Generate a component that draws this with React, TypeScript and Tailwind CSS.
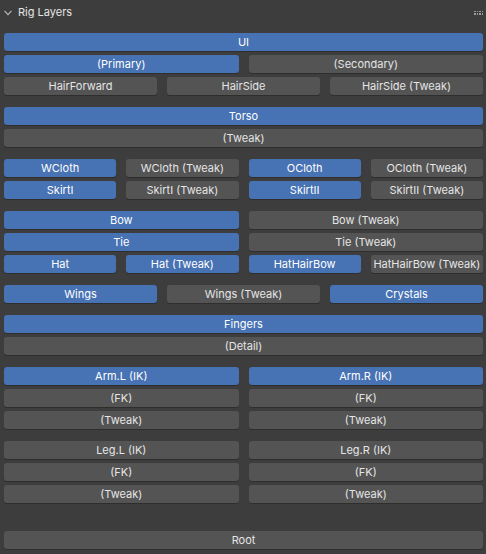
import React from 'react';

type Btn = { label: string; on?: boolean };

const Button = ({ label, on }: Btn) => (
  <div
    className={`h-[18px] rounded-[3px] flex items-center justify-center text-[11px] leading-none whitespace-nowrap overflow-hidden shadow-[0_1px_0_#2e2e2e] ${
      on ? 'bg-[#4772b3] text-white' : 'bg-[#545454] text-[#e5e5e5]'
    }`}
  >
    {label}
  </div>
);

const Row = ({ items, cols }: { items: Btn[]; cols: 1 | 2 | 3 | 4 }) => {
  const grid =
    cols === 1 ? 'grid-cols-1' : cols === 2 ? 'grid-cols-2' : cols === 3 ? 'grid-cols-3' : 'grid-cols-4';
  return (
    <div className={`grid ${grid} gap-x-[10px]`}>
      {items.map((b, i) => (
        <Button key={i} {...b} />
      ))}
    </div>
  );
};

const groups: { cols: 1 | 2 | 3 | 4; items: Btn[] }[][] = [
  [
    { cols: 1, items: [{ label: 'UI', on: true }] },
    { cols: 2, items: [{ label: '(Primary)', on: true }, { label: '(Secondary)' }] },
    { cols: 3, items: [{ label: 'HairForward' }, { label: 'HairSide' }, { label: 'HairSide (Tweak)' }] },
  ],
  [
    { cols: 1, items: [{ label: 'Torso', on: true }] },
    { cols: 1, items: [{ label: '(Tweak)' }] },
  ],
  [
    {
      cols: 4,
      items: [
        { label: 'WCloth', on: true },
        { label: 'WCloth (Tweak)' },
        { label: 'OCloth', on: true },
        { label: 'OCloth (Tweak)' },
      ],
    },
    {
      cols: 4,
      items: [
        { label: 'SkirtI', on: true },
        { label: 'SkirtI (Tweak)' },
        { label: 'SkirtII', on: true },
        { label: 'SkirtII (Tweak)' },
      ],
    },
  ],
  [
    { cols: 2, items: [{ label: 'Bow', on: true }, { label: 'Bow (Tweak)' }] },
    { cols: 2, items: [{ label: 'Tie', on: true }, { label: 'Tie (Tweak)' }] },
    {
      cols: 4,
      items: [
        { label: 'Hat', on: true },
        { label: 'Hat (Tweak)', on: true },
        { label: 'HatHairBow', on: true },
        { label: 'HatHairBow (Tweak)' },
      ],
    },
  ],
  [
    { cols: 3, items: [{ label: 'Wings', on: true }, { label: 'Wings (Tweak)' }, { label: 'Crystals', on: true }] },
  ],
  [
    { cols: 1, items: [{ label: 'Fingers', on: true }] },
    { cols: 1, items: [{ label: '(Detail)' }] },
  ],
  [
    { cols: 2, items: [{ label: 'Arm.L (IK)', on: true }, { label: 'Arm.R (IK)', on: true }] },
    { cols: 2, items: [{ label: '(FK)' }, { label: '(FK)' }] },
    { cols: 2, items: [{ label: '(Tweak)' }, { label: '(Tweak)' }] },
  ],
  [
    { cols: 2, items: [{ label: 'Leg.L (IK)' }, { label: 'Leg.R (IK)' }] },
    { cols: 2, items: [{ label: '(FK)' }, { label: '(FK)' }] },
    { cols: 2, items: [{ label: '(Tweak)' }, { label: '(Tweak)' }] },
  ],
];

export default function App() {
  return (
    <div
      className="w-[486px] h-[554px] bg-[#3d3d3d] text-[#e5e5e5] overflow-hidden"
      style={{ fontFamily: 'Inter, "DejaVu Sans", sans-serif' }}
    >
      {/* panel header */}
      <div className="h-[24px] flex items-center pl-[4px] pr-[2px] pt-[1px]">
        <svg width="8" height="6" viewBox="0 0 8 6" className="mr-[6px]">
          <path d="M0.5 0.8 L4 4.6 L7.5 0.8" fill="none" stroke="#bdbdbd" strokeWidth="1.1" />
        </svg>
        <span className="text-[11px] text-[#e5e5e5]">Rig Layers</span>
        <div className="ml-auto grid grid-cols-4 gap-[1px] mr-[1px]">
          {Array.from({ length: 8 }).map((_, i) => (
            <div key={i} className="w-[1.5px] h-[1.5px] bg-[#9a9a9a]" />
          ))}
        </div>
      </div>

      <div className="pl-[4px] pr-[3px] pt-[9px] flex flex-col gap-[12px]">
        {groups.map((g, gi) => (
          <div key={gi} className="flex flex-col gap-[4px]">
            {g.map((r, ri) => (
              <Row key={ri} cols={r.cols} items={r.items} />
            ))}
          </div>
        ))}
        <div className="mt-[16px]">
          <Button label="Root" />
        </div>
      </div>
    </div>
  );
}
